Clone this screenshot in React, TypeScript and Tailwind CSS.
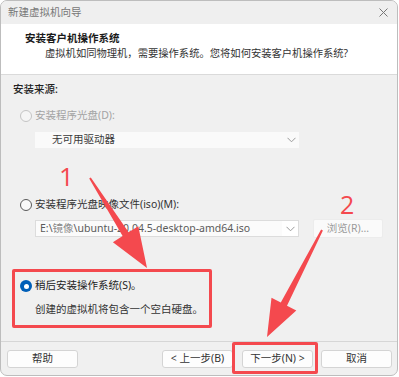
import type { ReactNode } from 'react'

const font = { fontFamily: '"Noto Sans", "Noto Sans CJK SC", sans-serif' }

function Radio({ state }: { state: 'disabled' | 'off' | 'on' }) {
  if (state === 'on') {
    return (
      <span className="w-[12px] h-[12px] rounded-full bg-[#005fb8] flex items-center justify-center shrink-0">
        <span className="w-[5px] h-[5px] rounded-full bg-white" />
      </span>
    )
  }
  return (
    <span
      className={`w-[12px] h-[12px] rounded-full border shrink-0 ${
        state === 'disabled' ? 'border-[#c4c4c4] bg-[#f5f5f5]' : 'border-[#5a5a5a] bg-[#f9f9f9]'
      }`}
    />
  )
}

function Chevron() {
  return (
    <svg className="w-[9px] h-[6px]" viewBox="0 0 9 6" fill="none" stroke="#9a9a9a" strokeWidth={1}>
      <path d="M0.5 0.8 L4.5 4.8 L8.5 0.8" />
    </svg>
  )
}

function FooterButton({ children, className = '' }: { children: ReactNode; className?: string }) {
  return (
    <div
      className={`h-[18px] w-[71px] flex items-center justify-center bg-[#fdfdfd] border border-[#d4d4d4] rounded-[3px] text-[10.5px] text-[#333] ${className}`}
    >
      {children}
    </div>
  )
}

export default function App() {
  return (
    <div className="relative w-[399px] h-[377px] bg-white overflow-hidden" style={font}>
      {/* Window */}
      <div className="w-[398px] h-[376px] border border-[#bdbdbd] rounded-[7px] overflow-hidden flex flex-col bg-[#f0f0f0]">
        {/* Title bar */}
        <div className="h-[23px] flex items-center justify-between pl-[7px] pr-[9px] bg-[#efefef]">
          <span className="text-[10.5px] text-[#777]">新建虚拟机向导</span>
          <svg className="w-[9px] h-[9px]" viewBox="0 0 9 9" stroke="#777" strokeWidth={1}>
            <path d="M0.5 0.5 L8.5 8.5 M8.5 0.5 L0.5 8.5" />
          </svg>
        </div>

        {/* Header */}
        <div className="h-[51px] bg-white border-b border-[#dadada] pt-[7px]">
          <div className="pl-[24px] text-[10.5px] leading-[14px] font-bold text-[#1a1a1a]">安装客户机操作系统</div>
          <div className="pl-[44px] mt-[1px] text-[10.3px] leading-[14px] text-[#333]">
            虚拟机如同物理机，需要操作系统。您将如何安装客户机操作系统?
          </div>
        </div>

        {/* Body */}
        <div className="h-[267px] border-b border-[#d6d6d6] pt-[7px]">
          <div className="pl-[12px] text-[10.5px] leading-[14px] font-medium text-[#222]">安装来源:</div>

          <div className="mt-[13px] pl-[19px] h-[14px] flex items-center gap-[3px]">
            <Radio state="disabled" />
            <span className="text-[10.5px] text-[#a3a3a3]">安装程序光盘(D):</span>
          </div>
          <div className="mt-[9px] ml-[34px] w-[264px] h-[16px] bg-[#fafafa] flex items-center justify-between pl-[17px] pr-[3px]">
            <span className="text-[10.5px] text-[#3a3a3a]">无可用驱动器</span>
            <Chevron />
          </div>

          <div className="mt-[50px] pl-[19px] h-[14px] flex items-center gap-[3px]">
            <Radio state="off" />
            <span className="text-[10.5px] text-[#333]">安装程序光盘映像文件(iso)(M):</span>
          </div>
          <div className="mt-[7px] flex items-center">
            <div className="ml-[34px] w-[264px] h-[17px] border border-[#dcdcdc] bg-[#f6f6f6] flex">
              <div className="flex-1 bg-[#fbfbfb] flex items-center pl-[4px] text-[10.5px] text-[#5a5a5a] whitespace-nowrap overflow-hidden">
                E:\<span className="text-[#8a8a8a]">镜像</span>\ubuntu-20.04.5-desktop-amd64.iso
              </div>
              <div className="w-[16px] bg-white flex items-center justify-center">
                <Chevron />
              </div>
            </div>
            <div className="ml-[14px] w-[70px] h-[19px] bg-[#fafafa] border border-[#ececec] rounded-[2px] flex items-center justify-center text-[10.5px] text-[#9a9a9a]">
              浏览(R)...
            </div>
          </div>

          {/* Highlighted option */}
          <div className="mt-[31px] ml-[11px] w-[200px] h-[59px] border-[3px] border-[#f4494e] rounded-[2px] pt-[7px]">
            <div className="pl-[5px] h-[14px] flex items-center gap-[3px]">
              <Radio state="on" />
              <span className="text-[10.5px] text-[#222]">稍后安装操作系统(S)。</span>
            </div>
            <div className="pl-[20px] mt-[9px] text-[10.5px] leading-[14px] text-[#333]">
              创建的虚拟机将包含一个空白硬盘。
            </div>
          </div>
        </div>

        {/* Footer */}
        <div className="flex-1 pt-[8px] pl-[6px] flex">
          <FooterButton>帮助</FooterButton>
          <FooterButton className="ml-[84px] w-[70px]">&lt; 上一步(B)</FooterButton>
          <FooterButton className="ml-[9px] w-[70px]">下一步(N) &gt;</FooterButton>
          <FooterButton className="ml-[8px]">取消</FooterButton>
        </div>
      </div>

      {/* Annotations */}
      <div className="absolute left-[232px] top-[342px] w-[86px] h-[32px] border-[3px] border-[#f4494e] rounded-[2px] pointer-events-none" />
      <span
        className="absolute left-[59px] top-[166px] text-[26px] leading-[20px] text-[#f4494e]"
        style={{ fontFamily: '"Open Sans", sans-serif' }}
      >
        1
      </span>
      <span
        className="absolute left-[340px] top-[194px] text-[25px] leading-[20px] text-[#f4494e]"
        style={{ fontFamily: '"Open Sans", sans-serif' }}
      >
        2
      </span>
      <svg className="absolute inset-0 pointer-events-none" width={399} height={377} viewBox="0 0 399 377">
        <polygon
          fill="#f4494e"
          points="90.8,177.5 128.6,232.3 138.3,226.2 147,268 112.9,242.2 122.6,236.1 89.2,178.5"
        />
        <polygon
          fill="#f4494e"
          points="322.9,230.5 287,305.7 296.3,310.5 267,337 271.5,297.7 280.8,302.5 321.1,229.5"
        />
      </svg>
    </div>
  )
}
